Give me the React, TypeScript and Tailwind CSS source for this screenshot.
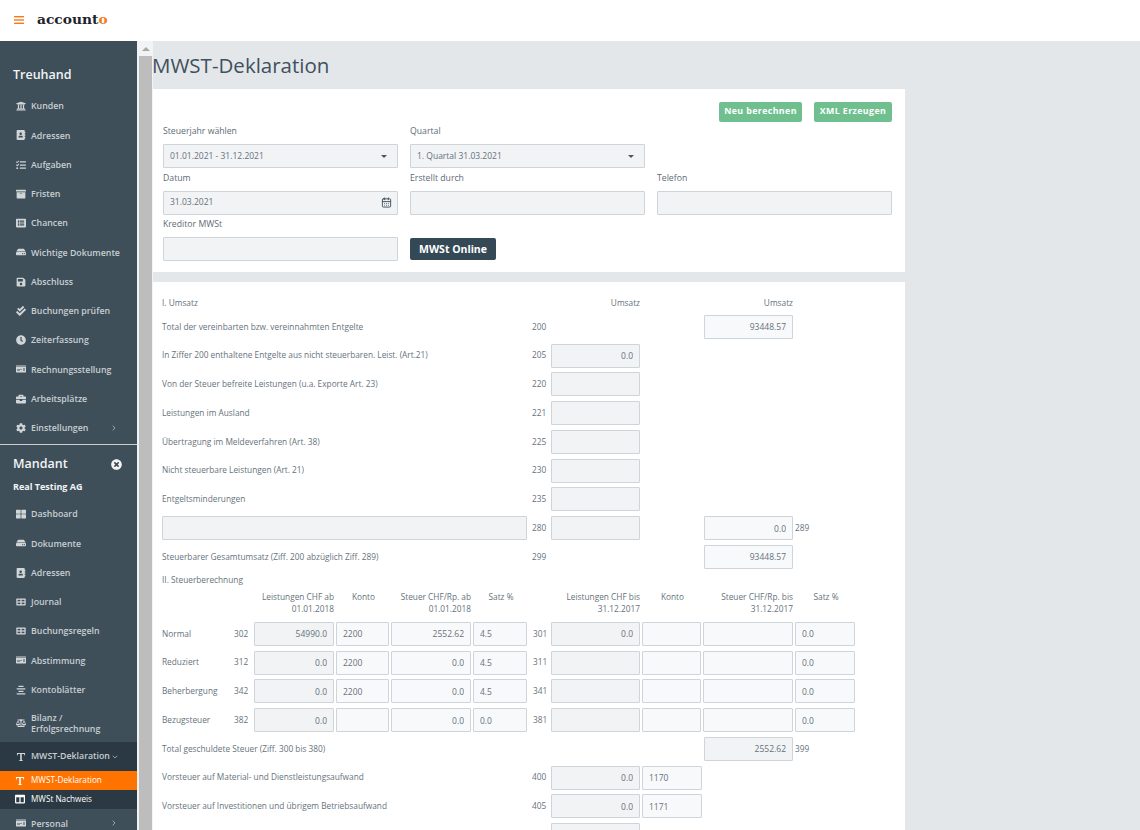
import type { ReactNode } from "react";
import { CalendarDays, ChevronDown, ChevronRight } from "lucide-react";
import {
  FaAddressBook,
  FaAlignCenter,
  FaArchive,
  FaBalanceScale,
  FaBriefcase,
  FaCheckDouble,
  FaClock,
  FaCog,
  FaColumns,
  FaHdd,
  FaListAlt,
  FaMoneyCheck,
  FaSave,
  FaTasks,
  FaThLarge,
  FaTimesCircle,
  FaUniversity,
} from "react-icons/fa";

const TextIcon = ({ className }: { className?: string }) => (
  <svg viewBox="0 0 16 16" className={className} fill="currentColor">
    <path d="M1.5 1.5h13v4h-1l-.6-2.2H9.3v9.6l1.7.5v1.1H5v-1.1l1.7-.5V3.3H3.1L2.5 5.5h-1z" />
  </svg>
);

// filled box with four panes, used for Journal and Buchungsregeln
const LedgerIcon = ({ className }: { className?: string }) => (
  <svg viewBox="0 0 16 16" className={className}>
    <rect x="0.5" y="2.5" width="15" height="11" rx="1" fill="currentColor" />
    <rect x="2.5" y="4.5" width="4.5" height="2.5" fill="#3e4f5a" />
    <rect x="9" y="4.5" width="4.5" height="2.5" fill="#3e4f5a" />
    <rect x="2.5" y="9" width="4.5" height="2.5" fill="#3e4f5a" />
    <rect x="9" y="9" width="4.5" height="2.5" fill="#3e4f5a" />
  </svg>
);

type NavItem = { label: ReactNode; icon: typeof FaHdd | typeof TextIcon; more?: boolean; tall?: boolean };

const treuhand: NavItem[] = [
  { label: "Kunden", icon: FaUniversity },
  { label: "Adressen", icon: FaAddressBook },
  { label: "Aufgaben", icon: FaTasks },
  { label: "Fristen", icon: FaArchive },
  { label: "Chancen", icon: FaListAlt },
  { label: "Wichtige Dokumente", icon: FaHdd },
  { label: "Abschluss", icon: FaSave },
  { label: "Buchungen prüfen", icon: FaCheckDouble },
  { label: "Zeiterfassung", icon: FaClock },
  { label: "Rechnungsstellung", icon: FaMoneyCheck },
  { label: "Arbeitsplätze", icon: FaBriefcase },
  { label: "Einstellungen", icon: FaCog, more: true },
];

const mandant: NavItem[] = [
  { label: "Dashboard", icon: FaThLarge },
  { label: "Dokumente", icon: FaHdd },
  { label: "Adressen", icon: FaAddressBook },
  { label: "Journal", icon: LedgerIcon },
  { label: "Buchungsregeln", icon: LedgerIcon },
  { label: "Abstimmung", icon: FaMoneyCheck },
  { label: "Kontoblätter", icon: FaAlignCenter },
  { label: <>Bilanz /<br />Erfolgsrechnung</>, icon: FaBalanceScale, tall: true },
];

const SideLink = ({ item }: { item: NavItem }) => {
  const Icon = item.icon;
  return (
    <div className={`flex items-center pl-[16px] pr-[19px] ${item.tall ? "h-[37.5px]" : "h-[29.25px]"}`}>
      <Icon className="w-[10px] h-[10px] shrink-0 text-[#d0d5d8]" />
      <span className="ml-[5px] flex-1 pt-[1px] whitespace-nowrap text-[8.8px] leading-[10.5px] font-semibold text-[#c8ced2]">{item.label}</span>
      {item.more && <ChevronRight className="w-[8px] h-[8px] text-[#c8ced2]" />}
    </div>
  );
};

const Sidebar = () => (
  <aside className="w-[137px] shrink-0 bg-[#3e4f5a] overflow-hidden">
    <div className="h-[50.5px] pt-[24px] pl-[13px] text-[12.5px] leading-[20px] font-semibold text-[#f2f4f5]">Treuhand</div>
    {treuhand.map((item) => (
      <SideLink key={String(item.label)} item={item} />
    ))}
    <div className="h-[1px] mt-[1.5px] bg-[#c8ced2]" />
    <div className="mt-[2px] h-[34px] pl-[13px] pr-[15px] flex items-center justify-between text-[12.5px] font-semibold text-[#f2f4f5]">
      Mandant
      <FaTimesCircle className="w-[11px] h-[11px] text-[#f2f4f5]" />
    </div>
    <div className="h-[12px] pl-[13px] text-[9px] leading-[12px] font-bold text-[#f2f4f5]">Real Testing AG</div>
    <div className="mt-[6.5px]">
      {mandant.map((item, i) => (
        <SideLink key={i} item={item} />
      ))}
    </div>
    <div className="h-[29.5px] bg-[#2a3943] flex items-center pl-[16px]">
      <TextIcon className="w-[10px] h-[10px] text-[#d0d5d8]" />
      <span className="ml-[5px] text-[8.8px] font-semibold text-[#c8ced2]">MWST-Deklaration</span>
      <ChevronDown className="ml-[1px] w-[8px] h-[8px] text-[#c8ced2]" />
    </div>
    <div className="h-[18.5px] bg-[#ff7300] flex items-center pl-[15px]">
      <TextIcon className="w-[10px] h-[10px] text-white" />
      <span className="ml-[6px] text-[8.2px] text-white font-medium">MWST-Deklaration</span>
    </div>
    <div className="h-[19px] bg-[#2a3943] flex items-center pl-[15px]">
      <FaColumns className="w-[10px] h-[10px] text-white" />
      <span className="ml-[6px] text-[8.2px] text-white font-medium">MWSt Nachweis</span>
    </div>
    <SideLink item={{ label: "Personal", icon: FaMoneyCheck, more: true }} />
  </aside>
);

const Scrollbar = () => (
  <div className="w-[16px] shrink-0 pl-[2px] bg-[#f2f3f4] flex flex-col">
    <div className="h-[15px] flex items-center justify-center">
      <div className="w-0 h-0 border-x-[4px] border-x-transparent border-b-[4px] border-b-[#a8a8a8]" />
    </div>
    <div className="w-[13px] flex-1 bg-[#bdbdbd]" />
  </div>
);

const fieldCls =
  "block w-full h-[24px] bg-[#f1f3f5] border-[1.5px] border-[#cdd5db] rounded-[1px] px-[6px] text-[8.5px] text-[#66727c] outline-none";

type InputProps = { value?: string; right?: boolean; light?: boolean; gap?: boolean };

const Box = ({ value = "", right, light, gap }: InputProps) => (
  <div className={gap ? "pr-[2px]" : ""}>
    <input
      readOnly
      value={value}
      className={`${fieldCls} ${right ? "text-right" : ""} ${light ? "bg-[#f8f9fa]" : ""}`}
    />
  </div>
);

const Field = ({ label, children }: { label?: string; children: ReactNode }) => (
  <div>
    <div className="h-[18px] mb-[4.3px] pt-[2px] flex items-center text-[8.7px] text-[#5d6a74]">{label}</div>
    {children}
  </div>
);

const rowCls = "grid grid-cols-[370px_19px_91px_62px_91px_auto] items-center h-[28.75px] text-[8.3px] text-[#66727c]";

type UmsatzRow = { label: string; code: string; a?: string; hasA?: boolean; konto?: string; b?: string; hasB?: boolean; tail?: string };

const umsatz: UmsatzRow[] = [
  { label: "Total der vereinbarten bzw. vereinnahmten Entgelte", code: "200", b: "93448.57", hasB: true },
  { label: "In Ziffer 200 enthaltene Entgelte aus nicht steuerbaren. Leist. (Art.21)", code: "205", a: "0.0", hasA: true },
  { label: "Von der Steuer befreite Leistungen (u.a. Exporte Art. 23)", code: "220", hasA: true },
  { label: "Leistungen im Ausland", code: "221", hasA: true },
  { label: "Übertragung im Meldeverfahren (Art. 38)", code: "225", hasA: true },
  { label: "Nicht steuerbare Leistungen (Art. 21)", code: "230", hasA: true },
  { label: "Entgeltsminderungen", code: "235", hasA: true },
];

const Row = ({ r }: { r: UmsatzRow }) => (
  <div className={rowCls}>
    <div>{r.label}</div>
    <div>{r.code}</div>
    <div>{r.hasA && <Box value={r.a} right gap />}</div>
    <div>{r.konto && <Box value={r.konto} light gap />}</div>
    <div>{r.hasB && <Box value={r.b} right light gap />}</div>
    <div>{r.tail}</div>
  </div>
);

const taxCols = "grid grid-cols-[72px_20px_82px_55px_82px_56px_22px_91px_61px_92px_62px] items-center text-[8.3px] text-[#66727c]";

const taxRows = [
  { name: "Normal", left: "302", l: ["54990.0", "2200", "2552.62", "4.5"], code: "301", r: ["0.0", "", "", "0.0"] },
  { name: "Reduziert", left: "312", l: ["0.0", "2200", "0.0", "4.5"], code: "311", r: ["", "", "", "0.0"] },
  { name: "Beherbergung", left: "342", l: ["0.0", "2200", "0.0", "4.5"], code: "341", r: ["", "", "", "0.0"] },
  { name: "Bezugsteuer", left: "382", l: ["0.0", "", "0.0", "0.0"], code: "381", r: ["", "", "", "0.0"] },
];

const TaxHead = ({ text, date }: { text: string; date: string }) => (
  <div className="text-right pr-[2px] leading-[12px]">
    {text}
    <br />
    {date}
  </div>
);

const App = () => (
  <div className="h-[830px] w-[1140px] overflow-hidden flex flex-col bg-white" style={{ fontFamily: "'Open Sans', sans-serif" }}>
    <header className="h-[41px] shrink-0 flex items-center bg-white">
      <svg viewBox="0 0 10 8" className="ml-[14px] -mt-[2px] w-[10px] h-[8px] text-[#f47b20]" fill="currentColor">
        <rect width="10" height="1.4" />
        <rect y="3.3" width="10" height="1.4" />
        <rect y="6.6" width="10" height="1.4" />
      </svg>
      <div className="ml-[13px] text-[13.8px] font-bold text-[#1d232b] -mt-[2px]" style={{ fontFamily: "'DejaVu Serif', serif" }}>
        account<span className="text-[#f47b20]">o</span>
      </div>
    </header>
    <div className="flex-1 flex min-h-0">
      <Sidebar />
      <Scrollbar />
      <main className="flex-1 min-w-0 bg-[#e4e7ea] overflow-hidden">
        <h1 className="h-[48px] -ml-[1px] flex items-center text-[20.5px] font-medium text-[#40505c]">MWST-Deklaration</h1>
        <section className="w-[752px] h-[183px] bg-white pt-[13px] pl-[10px] pr-[13px]">
          <div className="flex justify-end gap-[12px] h-[20px]">
            <button className="w-[83px] bg-[#70c08f] rounded-[2px] text-[8.8px] font-bold tracking-[0.4px] text-white">Neu berechnen</button>
            <button className="w-[78px] bg-[#70c08f] rounded-[2px] text-[8.8px] font-bold tracking-[0.4px] text-white">XML Erzeugen</button>
          </div>
          <div className="grid grid-cols-3 gap-x-[12px]">
            <Field label="Steuerjahr wählen">
              <div className={`${fieldCls} flex items-center justify-between pr-[10px]`}>
                01.01.2021 - 31.12.2021
                <div className="w-0 h-0 border-x-[3.5px] border-x-transparent border-t-[3.5px] border-t-[#4a5660]" />
              </div>
            </Field>
            <Field label="Quartal">
              <div className={`${fieldCls} flex items-center justify-between pr-[10px]`}>
                1. Quartal 31.03.2021
                <div className="w-0 h-0 border-x-[3.5px] border-x-transparent border-t-[3.5px] border-t-[#4a5660]" />
              </div>
            </Field>
            <div />
            <Field label="Datum">
              <div className={`${fieldCls} flex items-center justify-between pr-[5px]`}>
                31.03.2021
                <CalendarDays className="w-[11px] h-[11px] text-[#3e4f5a]" />
              </div>
            </Field>
            <Field label="Erstellt durch">
              <Box />
            </Field>
            <Field label="Telefon">
              <Box />
            </Field>
            <Field label="Kreditor MWSt">
              <Box />
            </Field>
            <div className="pt-[20px]">
              <button className="w-[86px] h-[22px] bg-[#344955] rounded-[2px] text-[10.5px] font-bold text-white">MWSt Online</button>
            </div>
          </div>
        </section>
        <section className="w-[752px] h-[560px] mt-[10px] bg-white pt-[11px] pl-[9px]">
          <div className="grid grid-cols-[370px_19px_91px_62px_91px_auto] h-[19.5px] items-center text-[8.3px] text-[#66727c]">
            <div>I. Umsatz</div>
            <div />
            <div className="text-right pr-[2px]">Umsatz</div>
            <div />
            <div className="text-right pr-[2px]">Umsatz</div>
          </div>
          {umsatz.map((r) => (
            <Row key={r.code} r={r} />
          ))}
          <div className={rowCls}>
            <div className="pr-[5px]">
              <Box />
            </div>
            <div>280</div>
            <Box gap />
            <div />
            <Box value="0.0" right light gap />
            <div>289</div>
          </div>
          <Row r={{ label: "Steuerbarer Gesamtumsatz (Ziff. 200 abzüglich Ziff. 289)", code: "299", b: "93448.57", hasB: true }} />
          <div className="mt-[2.6px] h-[12px] leading-[12px] text-[8.3px] text-[#66727c]">II. Steuerberechnung</div>
          <div className={`${taxCols} h-[33.6px] !items-start pt-[5px]`}>
            <div />
            <div />
            <TaxHead text="Leistungen CHF ab" date="01.01.2018" />
            <div className="text-center leading-[12px]">Konto</div>
            <TaxHead text="Steuer CHF/Rp. ab" date="01.01.2018" />
            <div className="text-center leading-[12px]">Satz %</div>
            <div />
            <TaxHead text="Leistungen CHF bis" date="31.12.2017" />
            <div className="text-center leading-[12px]">Konto</div>
            <TaxHead text="Steuer CHF/Rp. bis" date="31.12.2017" />
            <div className="text-center leading-[12px]">Satz %</div>
          </div>
          {taxRows.map((t) => (
            <div key={t.name} className={`${taxCols} h-[28.75px]`}>
              <div>{t.name}</div>
              <div>{t.left}</div>
              <Box value={t.l[0]} right gap />
              <Box value={t.l[1]} light gap />
              <Box value={t.l[2]} right light gap />
              <Box value={t.l[3]} light gap />
              <div className="pl-[4px]">{t.code}</div>
              <Box value={t.r[0]} right gap />
              <Box value={t.r[1]} light gap />
              <Box value={t.r[2]} light gap />
              <Box value={t.r[3]} light gap />
            </div>
          ))}
          <div className={rowCls}>
            <div>Total geschuldete Steuer (Ziff. 300 bis 380)</div>
            <div />
            <div />
            <div />
            <Box value="2552.62" right gap />
            <div>399</div>
          </div>
          <Row r={{ label: "Vorsteuer auf Material- und Dienstleistungsaufwand", code: "400", a: "0.0", hasA: true, konto: "1170" }} />
          <Row r={{ label: "Vorsteuer auf Investitionen und übrigem Betriebsaufwand", code: "405", a: "0.0", hasA: true, konto: "1171" }} />
          <div className={rowCls}>
            <div />
            <div />
            <Box gap />
          </div>
        </section>
      </main>
    </div>
  </div>
);

export default App;
